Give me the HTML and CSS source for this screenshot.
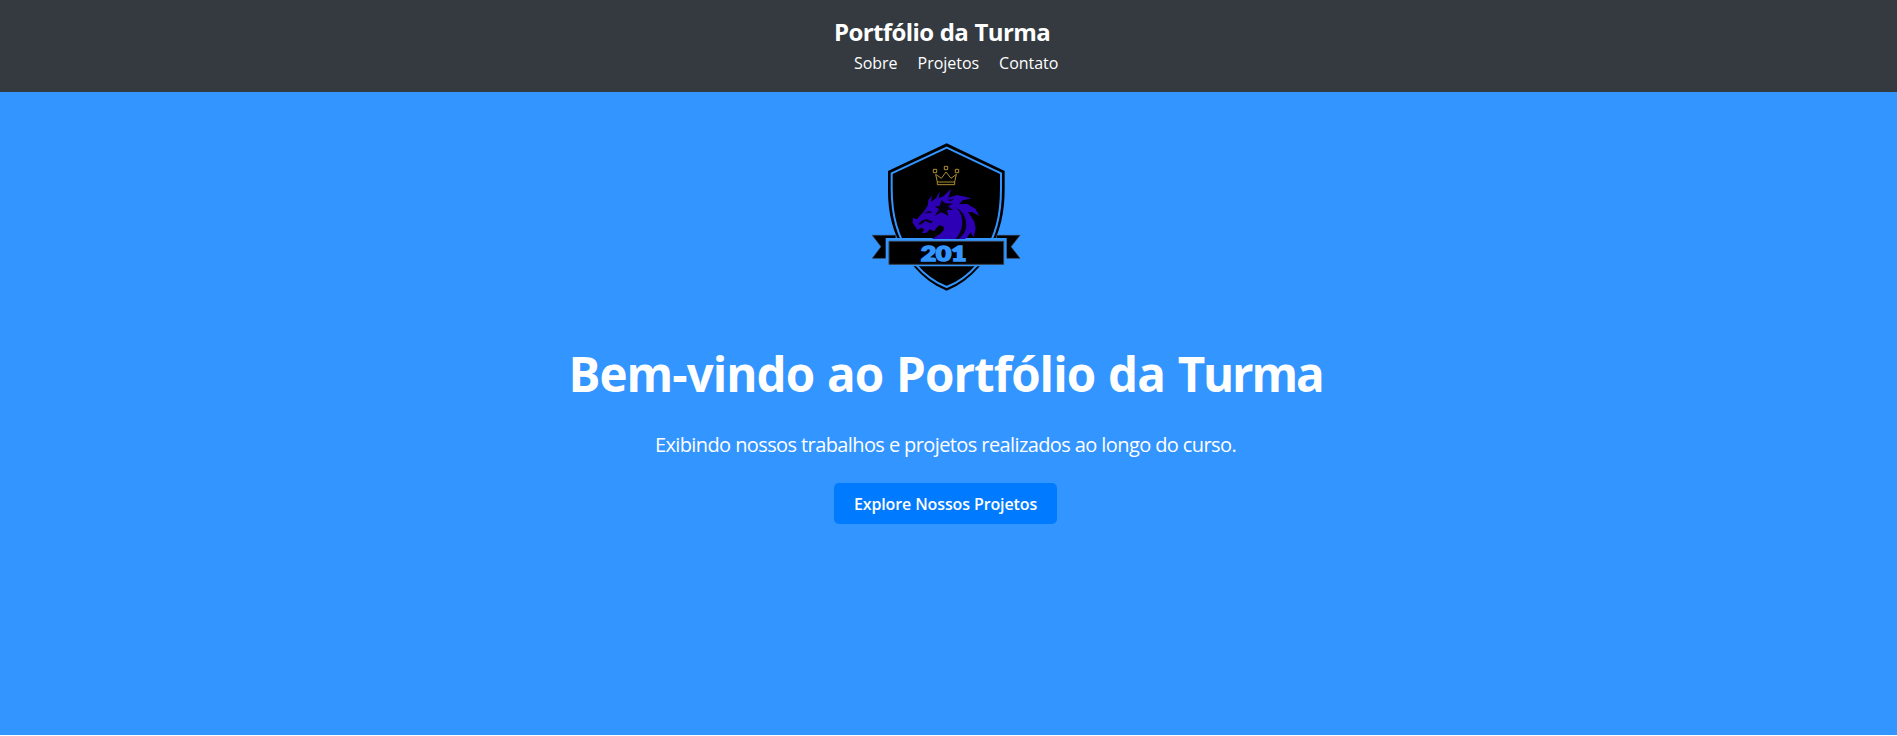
FILE: index.html
```html
<!DOCTYPE html>
<html lang="pt-BR">
<head>
<meta charset="utf-8">
<title>Portfólio da Turma</title>
<link rel="stylesheet" href="styles.css">
</head>
<body>
<header class="header">
  <div class="brand">Portfólio da Turma</div>
  <nav class="nav"><a>Sobre</a><a>Projetos</a><a>Contato</a></nav>
</header>
<main class="hero">
  <svg class="crest" viewBox="0 0 480 480" role="img" aria-label="201">
    <path d="M245 25 419 108V160C419 240 405 310 345 393Q300 446 245 467Q190 446 145 393C85 310 68 240 69 160V108Z" fill="#000"/>
    <path d="M245 38 408 115V160C408 235 397 305 338 388Q297 436 245 456Q193 436 152 388C93 305 80 235 80 160V115Z" fill="#000" stroke="#3395ff" stroke-width="6"/>
    <path d="M22 301H92V370H22L48 335ZM465 301H395V370H465L438 335Z" fill="#000" stroke="#333c48" stroke-width="2"/>
    <path d="M62 309H425V394H62Z" fill="#3395ff"/>
    <path d="M72 319H416V388H72Z" fill="#000" stroke="#333c48" stroke-width="3"/>
    <g fill="none" stroke="#ac8e32" stroke-width="3">
      <path d="M217 149V141H269V149ZM217 141 212 118 229 130 243 111 258 130 274 118 269 141"/>
      <path d="M205 103H215V113H205ZM238 94H248V104H238ZM271 103H281V113H271Z"/>
    </g>
    <path d="M144 248 156 253 167 240 177 229 188 212 190 196 201 181 198 201 213 190 224 169 221 190 235 184 259 161 250 188 276 180 320 190 293 196 282 207 307 207 331 221 343 243 321 231 309 231 328 260 332 281 326 307 316 292 307 307 300 312H200L224 298 236 286 236 275 224 270 214 279 208 289 194 283 184 294 170 294 178 285 170 278 157 284 143 263Z" fill="#2e00b5"/>
    <path d="M229 195 241 205 265 206 249 214 264 225 246 225 250 243 229 232 209 243 222 222 209 215 224 212ZM272 216Q304 233 304 273Q302 297 280 312H272Q296 284 291 252Q288 231 272 216ZM178 235 191 228 203 232 188 235ZM270 193 255 198 245 194ZM197 265 181 258 166 270 160 267 170 257 185 252 204 260Z" fill="#060014"/>
    <text x="236" y="378" text-anchor="middle" textLength="136" lengthAdjust="spacingAndGlyphs" class="crest-number">201</text>
  </svg>
  <h1 class="title">Bem-vindo ao Portfólio da <span class="title-end">Turma</span></h1>
  <p class="lead">Exibindo nossos trabalhos e projetos realizados ao longo do curso.</p>
  <a class="button">Explore Nossos Projetos</a>
</main>
</body>
</html>
```
FILE: styles.css
```css
* { box-sizing: border-box; }
body { margin: 0; background: #fff; color: #fff; font-family: "Open Sans", "Noto Sans", sans-serif; }
.header { height: 92px; background: #343a40; padding: 15px 0 0 834px; }
.brand { height: 34px; line-height: 33px; font-size: 24px; font-weight: 700; letter-spacing: -0.6px; word-spacing: 0.6px; white-space: nowrap; }
.nav { display: flex; gap: 20px; padding-left: 20px; height: 28px; line-height: 28px; font-size: 16px; letter-spacing: -0.03px; }
.hero { height: 643px; background: #3395ff; display: flex; flex-direction: column; align-items: center; padding: 43px 6px 0 0; }
.crest { width: 160px; height: 160px; flex: none; margin-right: 2px; }
.crest-number { font: 900 60px Lato, sans-serif; fill: #3395ff; stroke: #3395ff; stroke-width: 5px; }
.title { margin: 46px 0 0; height: 65px; line-height: 65px; font-size: 47.5px; font-weight: 700; letter-spacing: -0.95px; word-spacing: 1.5px; white-space: nowrap; }
.title-end { letter-spacing: -2.2px; }
.lead { margin: 23px 0 0; height: 30px; line-height: 31px; font-size: 20px; letter-spacing: -0.6px; white-space: nowrap; }
.button { margin-top: 24px; width: 223px; height: 41px; line-height: 42px; border-radius: 5px; background: #007bff; text-align: center; font-size: 16px; font-weight: 600; letter-spacing: -0.12px; white-space: nowrap; }
```
